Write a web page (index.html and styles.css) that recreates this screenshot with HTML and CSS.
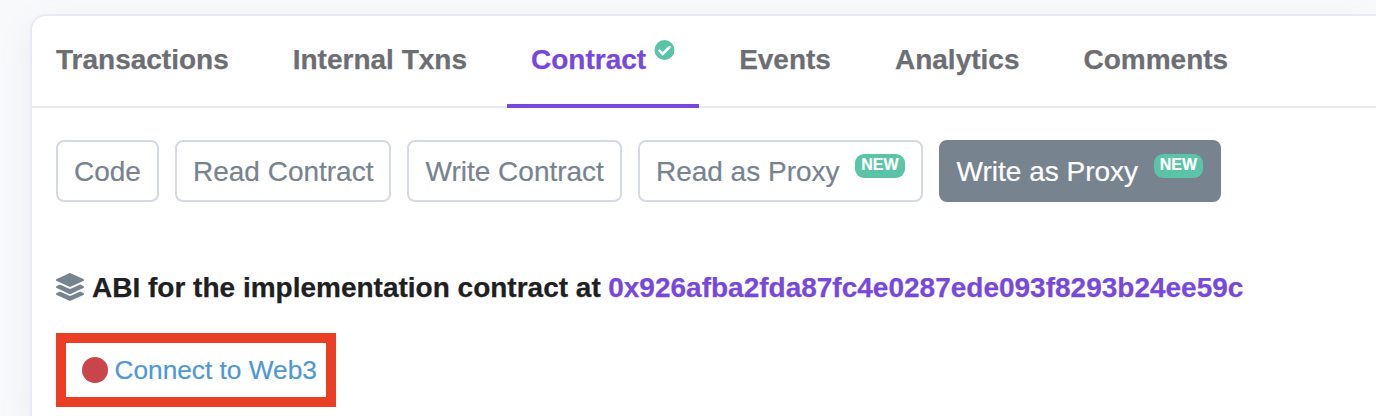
FILE: index.html
```html
<!DOCTYPE html>
<html lang="en">
<head>
<meta charset="utf-8">
<title>Contract</title>
<link rel="stylesheet" href="styles.css">
</head>
<body>
<main class="card">
  <nav class="tabs">
    <a class="tab">Transactions</a>
    <a class="tab">Internal Txns</a>
    <a class="tab tab-active">Contract<svg class="verified" viewBox="0 0 20 20"><circle cx="10" cy="10" r="10" fill="#5bc4a6"/><path d="M4.9 10.6 8.2 13.9 15.1 7" fill="none" stroke="#fff" stroke-width="2.5" stroke-linecap="round" stroke-linejoin="miter"/></svg></a>
    <a class="tab">Events</a>
    <a class="tab">Analytics</a>
    <a class="tab">Comments</a>
  </nav>
  <div class="buttons">
    <a class="btn">Code</a>
    <a class="btn">Read Contract</a>
    <a class="btn">Write Contract</a>
    <a class="btn">Read as Proxy<span class="badge">NEW</span></a>
    <a class="btn btn-active">Write as Proxy<span class="badge">NEW</span></a>
  </div>
  <div class="abi">
    <svg class="layers" viewBox="0 0 512 512"><path fill="#77838f" d="M12.41 148.02l232.94 105.67c6.8 3.09 14.49 3.09 21.29 0l232.94-105.67c16.55-7.51 16.55-32.52 0-40.03L266.65 2.31a25.607 25.607 0 0 0-21.29 0L12.41 107.98c-16.55 7.51-16.55 32.53 0 40.04zm487.18 88.28l-58.09-26.33-161.64 73.27c-7.56 3.43-15.59 5.17-23.86 5.17s-16.29-1.74-23.86-5.17L70.51 209.97l-58.1 26.33c-16.55 7.5-16.55 32.5 0 40l232.94 105.59c6.8 3.08 14.49 3.08 21.29 0L499.59 276.3c16.55-7.5 16.55-32.5 0-40zm0 127.8l-57.87-26.23-161.86 73.37c-7.56 3.43-15.59 5.17-23.86 5.17s-16.29-1.74-23.86-5.17L70.29 337.87 12.41 364.1c-16.55 7.5-16.55 32.5 0 40l232.94 105.59c6.8 3.08 14.49 3.08 21.29 0L499.59 404.1c16.55-7.5 16.55-32.5 0-40z"/></svg>
    <span class="abi-label">ABI for the implementation contract at</span>
    <a class="address">0x926afba2fda87fc4e0287ede093f8293b24ee59c</a>
  </div>
  <div class="connect"><span class="dot"></span><a class="connect-link">Connect to Web3</a></div>
</main>
</body>
</html>
```
FILE: styles.css
```css
* { box-sizing: border-box; }
body {
  margin: 0;
  padding: 14px 0 0 30px;
  height: 416px;
  overflow: hidden;
  background: #f8f9fb;
  font: 28px/42px "Liberation Sans", Arial, sans-serif;
}
.card {
  height: 402px;
  background: #fff;
  border: 2px solid #e7eaf3;
  border-right: 0;
  border-bottom: 0;
  border-radius: 16px 0 0 0;
  box-shadow: 0 12px 30px rgba(140, 152, 164, 0.13);
}
.tabs {
  display: flex;
  gap: 16px;
  height: 92px;
  border-bottom: 2px solid #e7eaf3;
}
.tab {
  display: flex;
  height: 92px;
  padding: 23px 24px 0;
  color: #6c6e74;
  font-weight: 700;
  white-space: nowrap;
  -webkit-text-stroke: 0.25px currentColor;
}
.tab-active { color: #7848dc; border-bottom: 4px solid #7848dc; }
.verified { width: 21px; height: 20px; margin: 1px 0 0 8px; }
.buttons { display: flex; gap: 16px; padding: 32px 24px 0; }
.btn {
  display: flex;
  height: 62px;
  padding: 9px 16px;
  border: 2px solid #d5dae2;
  border-radius: 8px;
  color: #77838f;
  white-space: nowrap;
  -webkit-text-stroke: 0.2px currentColor;
}
.btn-active { background: #77838f; border-color: #77838f; color: #fff; }
.badge {
  width: 49.3px;
  height: 24px;
  margin: 3px 0 0 15.7px;
  border-radius: 9px;
  background: #5bc4a6;
  color: #fff;
  font-size: 16px;
  font-weight: 700;
  line-height: 21px;
  text-align: center;
}
.abi {
  display: flex;
  align-items: center;
  height: 42px;
  margin: 65px 24px 0;
  font-weight: 700;
  white-space: nowrap;
  -webkit-text-stroke: 0.25px currentColor;
}
.layers { width: 28px; height: 28px; margin-bottom: 3px; }
.abi-label { margin: 0 7.5px 0 8px; color: #1e2022; }
.address { color: #7848dc; }
.connect {
  display: flex;
  align-items: center;
  gap: 6.5px;
  width: 280px;
  height: 74px;
  margin: 24px 0 0 24px;
  padding-left: 16px;
  border: 10px solid #ea3f25;
  white-space: nowrap;
}
.dot { width: 26px; height: 26px; border-radius: 50%; background: #ca444b; }
.connect-link { color: #4f97d8; font-size: 26.25px; -webkit-text-stroke: 0.2px currentColor; }
```
